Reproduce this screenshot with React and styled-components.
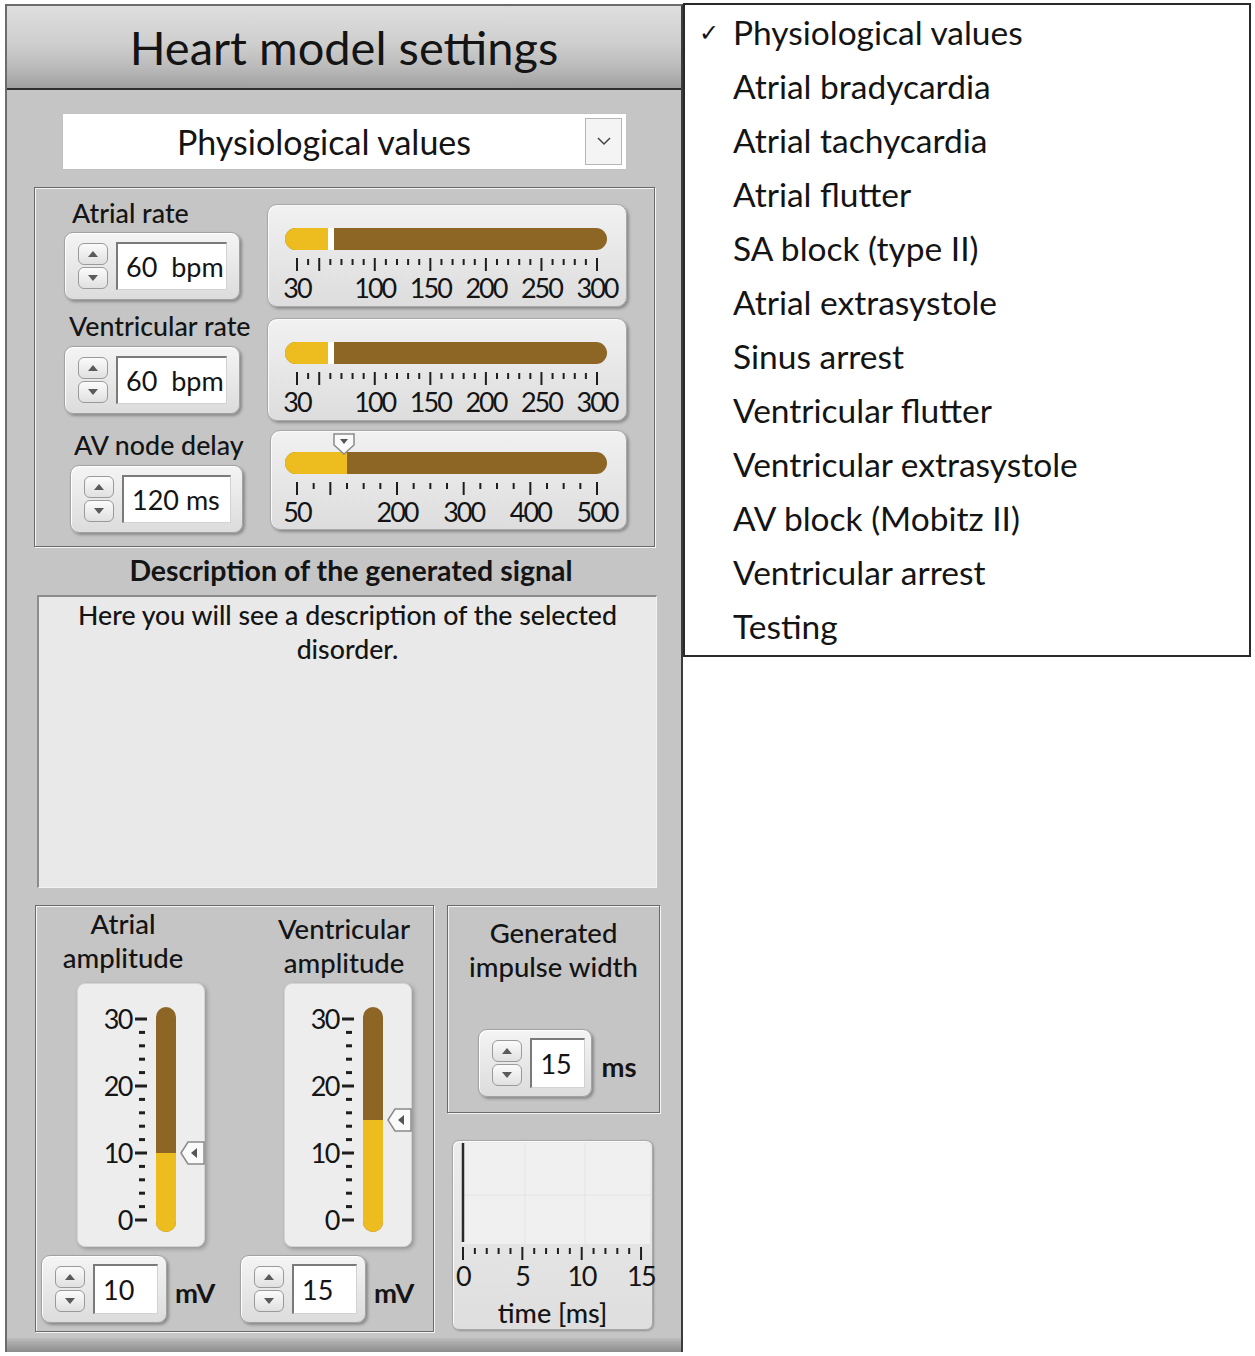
import React from "react";
import styled, { createGlobalStyle } from "styled-components";

const FONT = `"Lato", "Liberation Sans", Arial, sans-serif`;
const YELLOW = "#edbd1f";
const BROWN = "#8d6524";
const INK = "#141414";

const GlobalStyle = createGlobalStyle`
  html, body { margin: 0; padding: 0; background: #ffffff; }
  body { font-family: ${FONT}; color: ${INK}; }
  * { box-sizing: border-box; }
`;

const Page = styled.div`
  display: flex;
  align-items: flex-start;
  width: 1255px;
  height: 1356px;
  padding: 3px 0 0 5px;
`;

const Panel = styled.div`
  flex: none;
  width: 678px;
  height: 1348px;
  margin-top: 1px;
  display: flex;
  flex-direction: column;
  border: 2px solid #6c6c6c;
  border-right-color: #3c3c3c;
  border-bottom: none;
  background: linear-gradient(180deg, #d0d0d0 0px, #c5c5c5 70px);
`;

const Header = styled.div`
  flex: none;
  height: 84px;
  display: flex;
  align-items: center;
  justify-content: center;
  background: linear-gradient(180deg, #dedede 0%, #cfcfcf 45%, #bababa 75%, #a0a0a0 100%);
  border-bottom: 2px solid #2e2e2e;
  font-size: 47px;
`;

const Body = styled.div`
  flex: 1;
  display: flex;
  flex-direction: column;
  align-items: flex-start;
  padding-bottom: 6px;
`;

const Footer = styled.div`
  flex: none;
  height: 14px;
  background: linear-gradient(180deg, #bcbcbc, #8c8c8c);
`;

const Combo = styled.div`
  flex: none;
  display: flex;
  align-items: center;
  width: 565px;
  height: 57px;
  margin: 23px 0 0 55px;
  background: #fff;
  border: 1px solid #c2c2c2;
  font-size: 34px;
`;

const ComboText = styled.div`
  flex: 1;
  text-align: center;
`;

const ComboButton = styled.div`
  width: 37px;
  height: 47px;
  margin-right: 4px;
  display: flex;
  align-items: center;
  justify-content: center;
  border: 1px solid #b4b4b4;
  background: #f4f4f4;
`;

const GroupBox = styled.div`
  flex: none;
  width: ${(p) => p.$w}px;
  height: ${(p) => p.$h}px;
  margin-left: ${(p) => p.$ml || 0}px;
  margin-top: ${(p) => p.$mt || 0}px;
  padding-top: ${(p) => p.$pt || 0}px;
  border: 1px solid #6a6a6a;
  box-shadow: inset 1px 1px 0 #f4f4f4, 1px 1px 0 #f4f4f4;
`;

const RateRow = styled.div`
  display: flex;
  align-items: flex-start;
  margin-top: ${(p) => p.$mt || 0}px;
`;

const RateLeft = styled.div`
  width: 232px;
  display: flex;
  flex-direction: column;
  align-items: flex-start;
`;

const Label = styled.div`
  font-size: ${(p) => p.$fs || 27.5}px;
  line-height: ${(p) => p.$lh || 30}px;
  font-weight: 500;
  white-space: nowrap;
  margin-left: ${(p) => p.$ml || 0}px;
  margin-top: ${(p) => p.$mt || 0}px;
  width: ${(p) => (p.$w ? `${p.$w}px` : "auto")};
  text-align: center;
`;

/* spin box */
const SpinFrame = styled.div`
  flex: none;
  display: flex;
  align-items: center;
  gap: 8px;
  width: ${(p) => p.$w}px;
  height: 68px;
  padding-left: 13px;
  margin-left: ${(p) => p.$ml || 0}px;
  margin-top: ${(p) => p.$mt || 0}px;
  border: 1px solid #a2a2a2;
  border-radius: 9px;
  background: linear-gradient(180deg, #f4f4f4, #dcdcdc);
  box-shadow: 2px 2px 3px rgba(0, 0, 0, 0.3), inset 1px 1px 0 #fff;
`;

const ArrowCol = styled.div`
  display: flex;
  flex-direction: column;
  gap: 2px;
  width: 30px;
`;

const ArrowBtn = styled.div`
  height: 22px;
  display: flex;
  align-items: center;
  justify-content: center;
  border: 1px solid #9a9a9a;
  border-radius: 6px;
  background: linear-gradient(180deg, #fbfbfb, #e0e0e0);
`;

const Field = styled.div`
  flex: none;
  width: ${(p) => p.$w}px;
  height: ${(p) => p.$h || 48}px;
  display: flex;
  align-items: center;
  padding-left: 8px;
  background: #fff;
  border-style: solid;
  border-width: 2px 1px 1px 2px;
  border-color: #7a7a7a #d2d2d2 #d2d2d2 #7a7a7a;
  font-size: 27px;
  white-space: pre;
`;

const Unit = styled.span`
  font-size: 27.5px;
  font-weight: 700;
  margin-left: ${(p) => p.$ml || 8}px;
  margin-top: 6px;
`;

const SpinRow = styled.div`
  display: flex;
  align-items: center;
  margin-left: ${(p) => p.$ml || 0}px;
  margin-top: ${(p) => p.$mt || 0}px;
`;

const Tri = ({ up }) => (
  <svg width="12" height="8" viewBox="0 0 12 8">
    <polygon points={up ? "1,7 6,1 11,7" : "1,1 6,7 11,1"} fill="#5a5a5a" />
  </svg>
);

function Spin({ w, fw, fh, value, ml, mt }) {
  return (
    <SpinFrame $w={w} $ml={ml} $mt={mt}>
      <ArrowCol>
        <ArrowBtn>
          <Tri up />
        </ArrowBtn>
        <ArrowBtn>
          <Tri />
        </ArrowBtn>
      </ArrowCol>
      <Field $w={fw} $h={fh}>
        {value}
      </Field>
    </SpinFrame>
  );
}

/* horizontal slider */
const SliderPanel = styled.div`
  position: relative;
  flex: none;
  width: ${(p) => p.$w}px;
  height: ${(p) => p.$h}px;
  margin-left: ${(p) => p.$ml || 0}px;
  margin-top: ${(p) => p.$mt || 0}px;
  padding: ${(p) => p.$pt}px 0 0 ${(p) => p.$pl}px;
  border: 1px solid #a9a9a9;
  border-radius: 10px;
  background: linear-gradient(180deg, #f1f1f1, #dddddd);
  box-shadow: 2px 2px 3px rgba(0, 0, 0, 0.3), inset 1px 1px 0 #fafafa;
`;

const Track = styled.div`
  width: 322px;
  height: 22px;
  border-radius: 11px;
  background: ${BROWN};
  overflow: hidden;
`;

const Fill = styled.div`
  height: 100%;
  background: ${YELLOW};
  border-right: ${(p) => (p.$divider ? "6px solid #fff" : "none")};
`;

const TickSvg = styled.svg`
  display: block;
  margin-top: 8px;
`;

const ScaleLabels = styled.div`
  position: relative;
  width: 322px;
  height: 30px;
  margin-top: 2px;
`;

const ScaleNum = styled.span`
  position: absolute;
  top: 0;
  transform: translateX(-50%);
  font-size: 27px;
  line-height: 30px;
  letter-spacing: -2px;
  white-space: nowrap;
`;

const Thumb = styled.svg`
  position: absolute;
  top: 2px;
`;

const range = (min, max, step) => {
  const out = [];
  for (let v = min; v <= max + 1e-6; v += step) out.push(v);
  return out;
};

function HSlider({ min, max, step, value, majors, labels, divider, thumb, w, h, ml, mt, pl, pt }) {
  const pos = (v) => 12 + ((v - min) / (max - min)) * 300;
  const vp = pos(value);
  return (
    <SliderPanel $w={w} $h={h} $ml={ml} $mt={mt} $pl={pl} $pt={pt}>
      {thumb && (
        <Thumb width="22" height="22" viewBox="0 0 22 22" style={{ left: pl + vp - 11 }}>
          <polygon points="1,1 21,1 21,12 11,21 1,12" fill="#fafafa" stroke="#8a8a8a" strokeWidth="1.5" />
          <polygon points="7,6 15,6 11,11" fill="#555" />
        </Thumb>
      )}
      <Track>
        <Fill $divider={divider} style={{ width: divider ? vp + 4 : vp + 3 }} />
      </Track>
      <TickSvg width="322" height="13">
        {range(min, max, step).map((v) => {
          const major = majors.includes(v);
          const x = pos(v);
          return (
            <line key={v} x1={x} x2={x} y1={major ? 0 : 1} y2={major ? 13 : 7} stroke="#1e1e1e" strokeWidth="2" />
          );
        })}
      </TickSvg>
      <ScaleLabels>
        {labels.map((v) => (
          <ScaleNum key={v} style={{ left: pos(v) }}>
            {v}
          </ScaleNum>
        ))}
      </ScaleLabels>
    </SliderPanel>
  );
}

/* description */
const DescTitle = styled.div`
  width: 620px;
  margin: 8px 0 0 30px;
  padding-left: 8px;
  text-align: center;
  font-size: 28.5px;
  line-height: 30px;
  font-weight: 700;
  white-space: nowrap;
`;

const DescBox = styled.div`
  flex: none;
  width: 620px;
  height: 293px;
  margin: 10px 0 0 30px;
  padding: 1px 10px 0;
  background: #e9e9e9;
  border-style: solid;
  border-width: 2px 1px 1px 2px;
  border-color: #8c8c8c #f2f2f2 #f2f2f2 #8c8c8c;
  text-align: center;
  font-size: 26.7px;
  font-weight: 500;
  line-height: 34px;
  white-space: nowrap;
`;

/* bottom section */
const BottomRow = styled.div`
  display: flex;
  align-items: flex-start;
  gap: 13px;
  margin: 17px 0 0 28px;
`;

const AmpGrid = styled.div`
  display: grid;
  grid-template-columns: 198px 1fr;
`;

const AmpCol = styled.div`
  display: flex;
  flex-direction: column;
  align-items: flex-start;
`;

const VPanel = styled.div`
  position: relative;
  flex: none;
  display: flex;
  align-items: flex-start;
  width: 128px;
  height: 264px;
  margin-left: ${(p) => p.$ml}px;
  margin-top: ${(p) => p.$mt}px;
  padding-top: 23px;
  border: 1px solid #d4d4d4;
  border-radius: 8px;
  background: #ededed;
  box-shadow: 2px 2px 4px rgba(0, 0, 0, 0.25);
`;

const VLabels = styled.div`
  position: relative;
  width: 54px;
  height: 225px;
`;

const VNum = styled.span`
  position: absolute;
  right: 0;
  font-size: 27px;
  line-height: 30px;
  letter-spacing: -1.5px;
`;

const VTicks = styled.svg`
  display: block;
  margin-left: 2px;
`;

const VTrack = styled.div`
  position: relative;
  width: 20px;
  height: 225px;
  margin-left: 8px;
  border-radius: 10px;
  background: ${BROWN};
`;

const VFill = styled.div`
  position: absolute;
  left: 0;
  bottom: 0;
  width: 100%;
  border-radius: 0 0 10px 10px;
  background: ${YELLOW};
`;

const VPointer = styled.svg`
  position: absolute;
  left: 24px;
`;

function VSlider({ value, ml, mt }) {
  const y = (v) => 12 + (1 - v / 30) * 201;
  const yv = y(value);
  return (
    <VPanel $ml={ml} $mt={mt}>
      <VLabels>
        {[30, 20, 10, 0].map((v) => (
          <VNum key={v} style={{ top: y(v) - 15 }}>
            {v}
          </VNum>
        ))}
      </VLabels>
      <VTicks width="14" height="225">
        {range(0, 30, 2).map((v) => {
          const major = v % 10 === 0;
          return <line key={v} x1={major ? 1 : 5} x2={major ? 13 : 11} y1={y(v)} y2={y(v)} stroke="#1e1e1e" strokeWidth="3" />;
        })}
      </VTicks>
      <VTrack>
        <VFill style={{ height: 225 - yv }} />
        <VPointer width="25" height="24" viewBox="0 0 25 24" style={{ top: yv - 12 }}>
          <polygon points="1,12 8,1 24,1 24,23 8,23" fill="#fafafa" stroke="#8a8a8a" strokeWidth="1.5" />
          <polygon points="11,12 17,7 17,17" fill="#555" />
        </VPointer>
      </VTrack>
    </VPanel>
  );
}

function AmpColumn({ lines, value, labelMl, labelMt, panelMl, panelMt, spinMl }) {
  return (
    <AmpCol>
      <Label $w={lines.w} $ml={labelMl} $mt={labelMt} $lh={34}>
        {lines.a}
        <br />
        {lines.b}
      </Label>
      <VSlider value={value} ml={panelMl} mt={panelMt} />
      <SpinRow $ml={spinMl} $mt={8}>
        <Spin w={126} fw={65} fh={50} value={String(value)} />
        <Unit>mV</Unit>
      </SpinRow>
    </AmpCol>
  );
}

const RightCol = styled.div`
  display: flex;
  flex-direction: column;
  align-items: flex-start;
`;

const ImpulseBox = styled(GroupBox)`
  display: flex;
  flex-direction: column;
  align-items: center;
  padding-top: 10px;
`;

const GraphPanel = styled.div`
  flex: none;
  width: 201px;
  height: 190px;
  margin: 27px 0 0 5px;
  display: flex;
  flex-direction: column;
  border: 1px solid #a8a8a8;
  border-radius: 7px;
  background: linear-gradient(180deg, #ececec, #dedede);
  box-shadow: 1px 1px 2px rgba(0, 0, 0, 0.25), inset 1px 1px 0 #fbfbfb;
`;

const GraphLabels = styled.div`
  position: relative;
  height: 30px;
`;

const GraphNum = styled.span`
  position: absolute;
  top: 0;
  transform: translateX(-50%);
  font-size: 27px;
  line-height: 30px;
  letter-spacing: -1.5px;
`;

const AxisTitle = styled.div`
  margin-top: 7px;
  text-align: center;
  font-size: 27px;
  line-height: 30px;
  font-weight: 500;
`;

function Graph() {
  const gx = (v) => 10 + v * 11.87;
  return (
    <GraphPanel>
      <svg width="199" height="120" style={{ display: "block" }}>
        <rect x="9" y="2" width="188" height="101" fill="#f0f0f0" />
        <line x1="72" y1="2" x2="72" y2="103" stroke="#e4e4e4" strokeWidth="1" />
        <line x1="132" y1="2" x2="132" y2="103" stroke="#e4e4e4" strokeWidth="1" />
        <line x1="9" y1="54" x2="197" y2="54" stroke="#e4e4e4" strokeWidth="1" />
        <line x1="10" y1="2" x2="10" y2="101" stroke="#2a2a2a" strokeWidth="2.5" />
        {range(0, 15, 1).map((v) => {
          const major = v % 5 === 0;
          return <line key={v} x1={gx(v)} x2={gx(v)} y1={major ? 106 : 107} y2={major ? 119 : 113} stroke="#1e1e1e" strokeWidth="2" />;
        })}
      </svg>
      <GraphLabels>
        {[0, 5, 10, 15].map((v) => (
          <GraphNum key={v} style={{ left: gx(v) }}>
            {v}
          </GraphNum>
        ))}
      </GraphLabels>
      <AxisTitle>time [ms]</AxisTitle>
    </GraphPanel>
  );
}

/* drop-down list */
const Menu = styled.div`
  flex: none;
  width: 568px;
  height: 654px;
  background: #fff;
  border: 2px solid #2a2a2a;
`;

const MenuItem = styled.div`
  display: flex;
  align-items: center;
  height: 54px;
  font-size: 33.5px;
  white-space: nowrap;
`;

const Check = styled.span`
  flex: none;
  width: 48px;
  padding-right: 14px;
  text-align: right;
  font-size: 24px;
`;

const MENU = [
  "Physiological values",
  "Atrial bradycardia",
  "Atrial tachycardia",
  "Atrial flutter",
  "SA block (type II)",
  "Atrial extrasystole",
  "Sinus arrest",
  "Ventricular flutter",
  "Ventricular extrasystole",
  "AV block (Mobitz II)",
  "Ventricular arrest",
  "Testing",
];

export default function App() {
  return (
    <>
      <GlobalStyle />
      <Page>
        <Panel>
          <Header>Heart model settings</Header>
          <Body>
            <Combo>
              <ComboText>Physiological values</ComboText>
              <ComboButton>
                <svg width="14" height="9" viewBox="0 0 14 9">
                  <polyline points="1,1 7,7 13,1" fill="none" stroke="#444" strokeWidth="1.5" />
                </svg>
              </ComboButton>
            </Combo>

            <GroupBox $w={621} $h={360} $ml={27} $mt={17} $pt={10}>
              <RateRow>
                <RateLeft>
                  <Label $ml={37} $fs={26.8}>Atrial rate</Label>
                  <Spin w={176} fw={111} value="60  bpm" ml={29} mt={4} />
                </RateLeft>
                <HSlider
                  min={30} max={300} step={10} value={60}
                  majors={[30, 50, 100, 150, 200, 250, 300]}
                  labels={[30, 100, 150, 200, 250, 300]}
                  divider w={360} h={103} mt={6} pl={17} pt={23}
                />
              </RateRow>
              <RateRow $mt={4}>
                <RateLeft>
                  <Label $ml={34} $fs={26.8}>Ventricular rate</Label>
                  <Spin w={176} fw={111} value="60  bpm" ml={29} mt={5} />
                </RateLeft>
                <HSlider
                  min={30} max={300} step={10} value={60}
                  majors={[30, 50, 100, 150, 200, 250, 300]}
                  labels={[30, 100, 150, 200, 250, 300]}
                  divider w={360} h={103} mt={7} pl={17} pt={23}
                />
              </RateRow>
              <RateRow $mt={9}>
                <RateLeft>
                  <Label $ml={39} $fs={26.8}>AV node delay</Label>
                  <Spin w={173} fw={109} value="120 ms" ml={35} mt={5} />
                </RateLeft>
                <HSlider
                  min={50} max={500} step={25} value={120}
                  majors={[50, 100, 200, 300, 400, 500]}
                  labels={[50, 200, 300, 400, 500]}
                  thumb w={357} h={100} ml={3} mt={0} pl={14} pt={21}
                />
              </RateRow>
            </GroupBox>

            <DescTitle>Description of the generated signal</DescTitle>
            <DescBox>
              Here you will see a description of the selected
              <br />
              disorder.
            </DescBox>

            <BottomRow>
              <GroupBox $w={399} $h={427}>
                <AmpGrid>
                  <AmpColumn
                    lines={{ a: "Atrial", b: "amplitude", w: 172 }}
                    value={10} labelMl={1} labelMt={1} panelMl={41} panelMt={8} spinMl={5}
                  />
                  <AmpColumn
                    lines={{ a: "Ventricular", b: "amplitude", w: 190 }}
                    value={15} labelMl={15} labelMt={6} panelMl={50} panelMt={3} spinMl={6}
                  />
                </AmpGrid>
              </GroupBox>

              <RightCol>
                <ImpulseBox $w={213} $h={208}>
                  <Label $lh={34}>
                    Generated
                    <br />
                    impulse width
                  </Label>
                  <SpinRow $mt={45} $ml={8}>
                    <Spin w={114} fw={55} fh={50} value="15" />
                    <Unit $ml={9}>ms</Unit>
                  </SpinRow>
                </ImpulseBox>
                <Graph />
              </RightCol>
            </BottomRow>
          </Body>
          <Footer />
        </Panel>

        <Menu>
          {MENU.map((m, i) => (
            <MenuItem key={m}>
              <Check>{i === 0 ? "✓" : ""}</Check>
              {m}
            </MenuItem>
          ))}
        </Menu>
      </Page>
    </>
  );
}
